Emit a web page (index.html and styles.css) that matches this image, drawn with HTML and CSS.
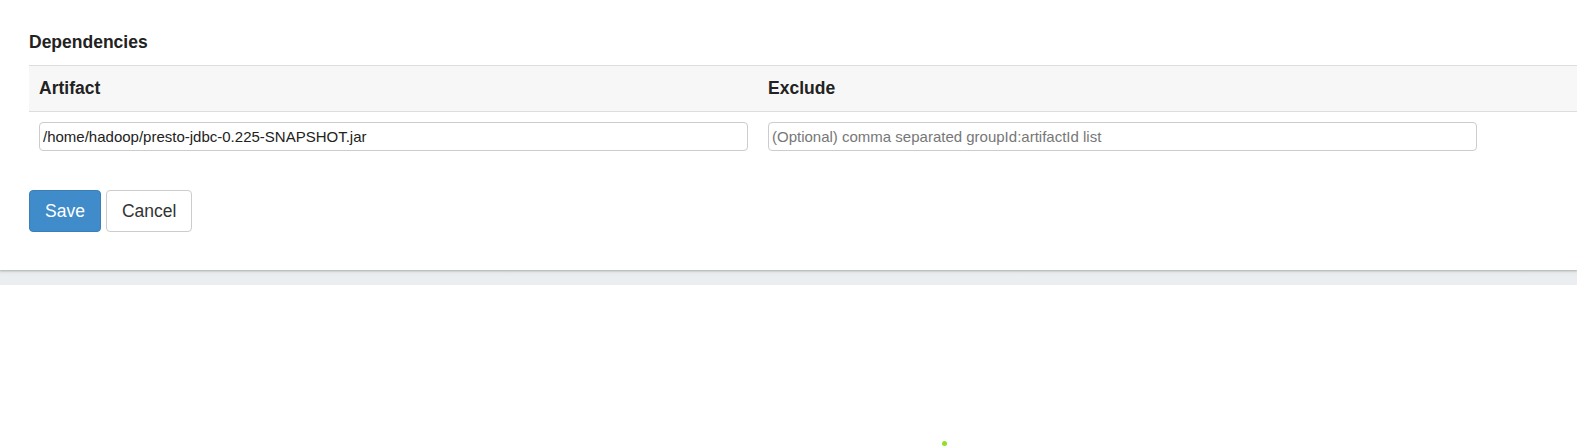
FILE: index.html
```html
<!DOCTYPE html>
<html>
<head>
<meta charset="utf-8">
<link rel="stylesheet" href="styles.css">
</head>
<body>
<div class="panel">
  <h4 class="title">Dependencies</h4>
  <table class="deps">
    <colgroup>
      <col class="c1"><col class="c2"><col class="c3">
    </colgroup>
    <thead>
      <tr><th>Artifact</th><th>Exclude</th><th></th></tr>
    </thead>
    <tbody>
      <tr>
        <td><input class="field" type="text" value="/home/hadoop/presto-jdbc-0.225-SNAPSHOT.jar"></td>
        <td><input class="field" type="text" placeholder="(Optional) comma separated groupId:artifactId list"></td>
        <td></td>
      </tr>
    </tbody>
  </table>
  <div class="actions">
    <button class="btn btn-primary">Save</button>
    <button class="btn btn-default">Cancel</button>
  </div>
</div>
<div class="strip"></div>
<div class="dot"></div>
</body>
</html>
```
FILE: styles.css
```css
html, body {
  margin: 0;
  padding: 0;
  background: #fff;
  font-family: "Liberation Sans", Arial, sans-serif;
  color: #333;
}
.panel {
  background: #fff;
  padding: 32px 0 38px 29px;
  box-shadow: 0 1px 2px rgba(0,0,0,0.18);
  position: relative;
}
.title {
  margin: 0 0 13px 0;
  font-size: 17.5px;
  line-height: 20px;
  font-weight: bold;
  color: #222;
}
.deps {
  width: 100%;
  border-collapse: collapse;
  table-layout: fixed;
}
.c1, .c2 { width: 729px; }
.deps th {
  text-align: left;
  font-size: 17.5px;
  line-height: 25px;
  font-weight: bold;
  color: #222;
  background: #f7f7f7;
  padding: 10px;
  border-top: 1px solid #ddd;
  border-bottom: 1px solid #ddd;
}
.deps td {
  padding: 10px;
  vertical-align: top;
}
.field {
  display: block;
  box-sizing: border-box;
  width: 100%;
  height: 29px;
  margin: 0;
  padding: 0 3px;
  border: 1px solid #ccc;
  border-radius: 4px;
  font-family: "Liberation Sans", Arial, sans-serif;
  font-size: 15px;
  color: #222;
  background: #fff;
  outline: none;
}
.field::placeholder { color: #777; }
.actions {
  display: flex;
  gap: 5px;
  margin-top: 29px;
}
.btn {
  box-sizing: border-box;
  height: 42px;
  padding: 0 15px;
  font-family: "Liberation Sans", Arial, sans-serif;
  font-size: 17.5px;
  line-height: 25px;
  border-radius: 4px;
  border: 1px solid transparent;
  cursor: pointer;
}
.btn-primary {
  background: #408bca;
  border-color: #3a7fb8;
  color: #fff;
}
.btn-default {
  background: #fff;
  border-color: #ccc;
  color: #333;
}
.strip {
  height: 15px;
  background: linear-gradient(#d6d9da 0, #e6eaeb 3px, #ebeef0 6px, #ebeef0 100%);
}
.dot {
  position: absolute;
  left: 942px;
  top: 441px;
  width: 5px;
  height: 5px;
  border-radius: 50%;
  background: #93e022;
}
```
